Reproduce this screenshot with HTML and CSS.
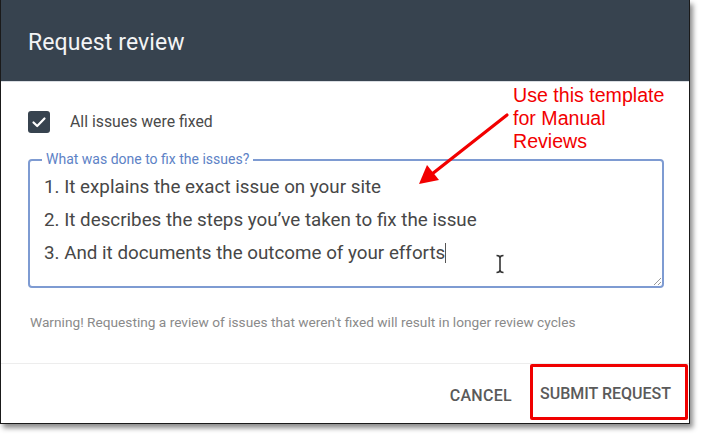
FILE: index.html
```html
<!DOCTYPE html>
<html>
<head>
<meta charset="utf-8">
<link rel="stylesheet" href="styles.css">
</head>
<body>
<div class="page">
  <div class="dialog">
    <div class="header"><h1 class="title">Request review</h1></div>
    <div class="content">
      <div class="check-row">
        <span class="checkbox">
          <svg width="22" height="22" viewBox="0 0 22 22"><path d="M5.5 11.5 L9.2 15 L16.5 7.5" fill="none" stroke="#fff" stroke-width="2.2" stroke-linecap="round" stroke-linejoin="round"/></svg>
        </span>
        <span class="check-label">All issues were fixed</span>
      </div>
      <fieldset class="field">
        <legend class="field-label">What was done to fix the issues?</legend>
        <div class="line">1. It explains the exact issue on your site</div>
        <div class="line">2. It describes the steps you’ve taken to fix the issue</div>
        <div class="line">3. And it documents the outcome of your efforts<span class="caret"></span></div>
        <svg class="resize" width="10" height="10" viewBox="0 0 10 10"><path d="M9 2 L2 9 M9 6 L6 9" stroke="#999" stroke-width="1"/></svg>
        <svg class="ibeam" width="10" height="20" viewBox="0 0 10 20"><path d="M1.5 1.5 Q5 1.5 5 4 Q5 1.5 8.5 1.5 M5 4 L5 16 M1.5 18.5 Q5 18.5 5 16 Q5 18.5 8.5 18.5" fill="none" stroke="#333" stroke-width="1.6"/></svg>
      </fieldset>
      <p class="warning">Warning! Requesting a review of issues that weren't fixed will result in longer review cycles</p>
    </div>
    <div class="footer">
      <button class="btn btn-cancel">CANCEL</button>
      <button class="btn btn-submit">SUBMIT REQUEST</button>
    </div>
  </div>
  <div class="note">Use this template<br>for Manual<br>Reviews</div>
  <svg class="arrow" width="702" height="435" viewBox="0 0 702 435">
    <line x1="507" y1="115" x2="432" y2="174" stroke="#f20000" stroke-width="3.2" stroke-linecap="round"/>
    <polygon points="419,184 427,165 439,180" fill="#f20000"/>
  </svg>
</div>
</body>
</html>
```
FILE: styles.css
```css
html, body {
  margin: 0;
  padding: 0;
  background: #fff;
}
.page {
  position: relative;
  width: 702px;
  height: 435px;
  overflow: hidden;
  font-family: Roboto, "Liberation Sans", sans-serif;
}
.dialog {
  width: 688px;
  height: 423px;
  border: 1px solid #1a1a1a;
  border-top: 0;
  box-shadow: 3px 4px 5px rgba(0, 0, 0, 0.45);
  background: #fff;
  display: flex;
  flex-direction: column;
}
.header {
  height: 81px;
  background: #37434f;
  border-bottom: 1px solid #d9dde2;
  display: flex;
  align-items: center;
  padding-left: 27px;
  flex-shrink: 0;
}
.title {
  margin: 0;
  font-size: 23px;
  font-weight: 400;
  color: #f3f4f5;
  letter-spacing: 0.1px;
  position: relative;
  top: 2px;
}
.content {
  padding: 28px 25px 0 27px;
  flex: 1;
}
.check-row {
  display: flex;
  align-items: center;
  height: 23px;
}
.checkbox {
  width: 22px;
  height: 22px;
  background: #37434f;
  border-radius: 3px;
  display: flex;
}
.check-label {
  margin-left: 20px;
  font-size: 15.8px;
  color: #4a4a4a;
}
.field {
  position: relative;
  margin: 19px 0 0 0;
  padding: 4px 14px 16px 14px;
  border: 2px solid #7e9bd2;
  border-radius: 4px;
  min-width: 0;
}
.field-label {
  font-size: 14px;
  line-height: 15px;
  color: #5d82c6;
  padding: 0 4px;
  margin-left: -2px;
}
.line {
  font-size: 18.8px;
  line-height: 33px;
  height: 33px;
  color: #474747;
}
.caret {
  display: inline-block;
  width: 1px;
  height: 20px;
  background: #555;
  vertical-align: -4px;
}
.resize {
  position: absolute;
  right: 0;
  bottom: 0;
}
.ibeam {
  position: absolute;
  left: 465px;
  top: 87px;
}
.warning {
  margin: 26px 0 0 2px;
  font-size: 13.7px;
  line-height: 16px;
  color: #8a8a8a;
}
.footer {
  height: 59px;
  border-top: 1px solid #ededed;
  display: flex;
  justify-content: flex-end;
  flex-shrink: 0;
}
.btn {
  background: none;
  border: 0;
  font-family: Roboto, "Liberation Sans", sans-serif;
  font-size: 16px;
  font-weight: 500;
  color: #5a5a5a;
  padding: 0;
  margin: 0;
}
.btn-cancel {
  align-self: center;
  margin-top: 4px;
  letter-spacing: 0.3px;
}
.btn-submit {
  margin-left: 18px;
  margin-right: 1px;
  height: 56px;
  padding: 2px 14px 0 7px;
  border: 3px solid #f00000;
  border-radius: 2px;
  align-self: flex-start;
}
.note {
  position: absolute;
  left: 513px;
  top: 84px;
  font-family: "Liberation Sans", Arial, sans-serif;
  font-size: 19.6px;
  line-height: 23px;
  color: #f20000;
}
.arrow {
  position: absolute;
  left: 0;
  top: 0;
  pointer-events: none;
}
```
